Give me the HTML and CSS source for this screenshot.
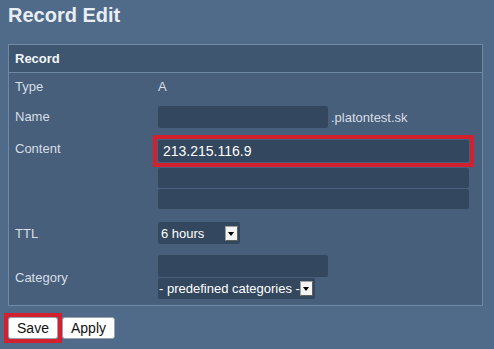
FILE: index.html
```html
<!DOCTYPE html>
<html lang="en">
<head>
<meta charset="utf-8">
<title>Record Edit</title>
<link rel="stylesheet" href="styles.css">
</head>
<body>

    <h1>Record Edit</h1>

    <div class="panel">
        <div class="panel-head">Record</div>
        <div class="panel-body">
            <div class="row row-type">
                <div class="label">Type</div>
                <div class="value">A</div>
            </div>
            <div class="row row-name">
                <div class="label">Name</div>
                <div class="value">
                    <input type="text" class="field field-name" value="">
                    <span class="suffix">.platontest.sk</span>
                </div>
            </div>
            <div class="row row-content">
                <div class="label">Content</div>
                <div class="value stack">
                    <span class="mark mark-field">
                        <input type="text" class="field field-wide" value="213.215.116.9">
                    </span>
                    <input type="text" class="field field-wide field-extra" value="">
                    <input type="text" class="field field-wide field-extra" value="">
                </div>
            </div>
            <div class="row row-ttl">
                <div class="label">TTL</div>
                <div class="value">
                    <div class="select select-ttl">
                        <span class="select-text">6 hours</span>
                        <span class="select-arrow"></span>
                    </div>
                </div>
            </div>
            <div class="row row-category">
                <div class="label">Category</div>
                <div class="value stack">
                    <input type="text" class="field field-name" value="">
                    <div class="select select-category">
                        <span class="select-text">- predefined categories -</span>
                        <span class="select-arrow"></span>
                    </div>
                </div>
            </div>
        </div>
    </div>

    <div class="actions">
        <span class="mark mark-button"><button class="btn-save">Save</button></span>
        <button>Apply</button>
    </div>

</body>
</html>
```

FILE: styles.css
```css
body {
    background-color: #4f6b89;
    color: #d6dee7;
    font-family: "Liberation Sans", Arial, sans-serif;
    font-size: 13px;
    margin: 0;
    padding: 4px 8px;
}

h1 {
    color: #e9eef4;
    font-size: 20px;
    line-height: 23px;
    margin: 0 0 17px 0;
}

.panel {
    width: 473px;
    border: 1px solid #6e8aa7;
    background-color: #475f7a;
}

.panel-head {
    background-color: #3e566f;
    border-bottom: 1px solid #6e8aa7;
    color: #f2f5f8;
    font-weight: bold;
    height: 27px;
    line-height: 27px;
    padding-left: 6px;
}

.row {
    display: flex;
    align-items: center;
}

.label {
    width: 143px;
    padding-left: 6px;
    flex-shrink: 0;
}

.value {
    display: flex;
    align-items: center;
}

.stack {
    flex-direction: column;
    align-items: flex-start;
}

.row-type {
    padding: 5px 0;
    line-height: 18px;
}

.row-name {
    padding: 5px 0;
}

.row-name .label {
    line-height: 22px;
}

.row-content {
    align-items: flex-start;
    padding: 7px 0 5px 0;
}

.row-content .label {
    line-height: 18px;
}

.row-ttl {
    padding: 8px 0 6px 0;
}

.row-category {
    padding: 5px 0 6px 0;
}

.field {
    background-color: #33475e;
    border: none;
    border-radius: 2px;
    color: #ffffff;
    font-family: "Liberation Sans", Arial, sans-serif;
    font-size: 14px;
    height: 22px;
    margin: 0;
    padding: 0 5px;
    box-sizing: border-box;
    display: block;
}

.field-name {
    width: 170px;
}

.field-wide {
    width: 311px;
}

.field-extra {
    height: 20px;
    margin-top: 1px;
}

/* red marker boxes round highlighted controls */
.mark {
    display: block;
    border: 4px solid #d3202e;
}

.mark-field {
    padding: 1px;
    margin: -5px 0 0 -5px;
}

.mark-button {
    margin: -4px 0 -4px -4px;
}

.suffix {
    margin-left: 3px;
}

.select {
    display: flex;
    align-items: center;
    background-color: #33475e;
    border-radius: 2px;
    color: #ffffff;
    height: 22px;
    box-sizing: border-box;
}

.select-ttl {
    width: 82px;
    padding-left: 3px;
}

.select-category {
    width: 157px;
    margin-top: 1px;
    height: 21px;
    padding-left: 1px;
}

.select-text {
    flex: 1;
    white-space: nowrap;
}

.select-arrow {
    width: 13px;
    height: 15px;
    margin-right: 2px;
    box-sizing: border-box;
    background-color: #f4f4f4;
    border: 1px solid #a0a0a0;
    border-right-color: #606060;
    border-bottom-color: #606060;
    position: relative;
}

.select-arrow::after {
    content: "";
    position: absolute;
    left: 2px;
    top: 5px;
    border-left: 3.5px solid transparent;
    border-right: 3.5px solid transparent;
    border-top: 4px solid #000000;
}

.actions {
    display: flex;
    align-items: flex-start;
    margin-top: 11px;
}

button {
    background-color: #ffffff;
    border: 1px solid #9aa4ae;
    border-radius: 3px;
    color: #111111;
    font-family: "Liberation Sans", Arial, sans-serif;
    font-size: 14px;
    height: 22px;
    padding: 0;
    width: 53px;
    display: block;
}

.btn-save {
    width: 50px;
}
```
